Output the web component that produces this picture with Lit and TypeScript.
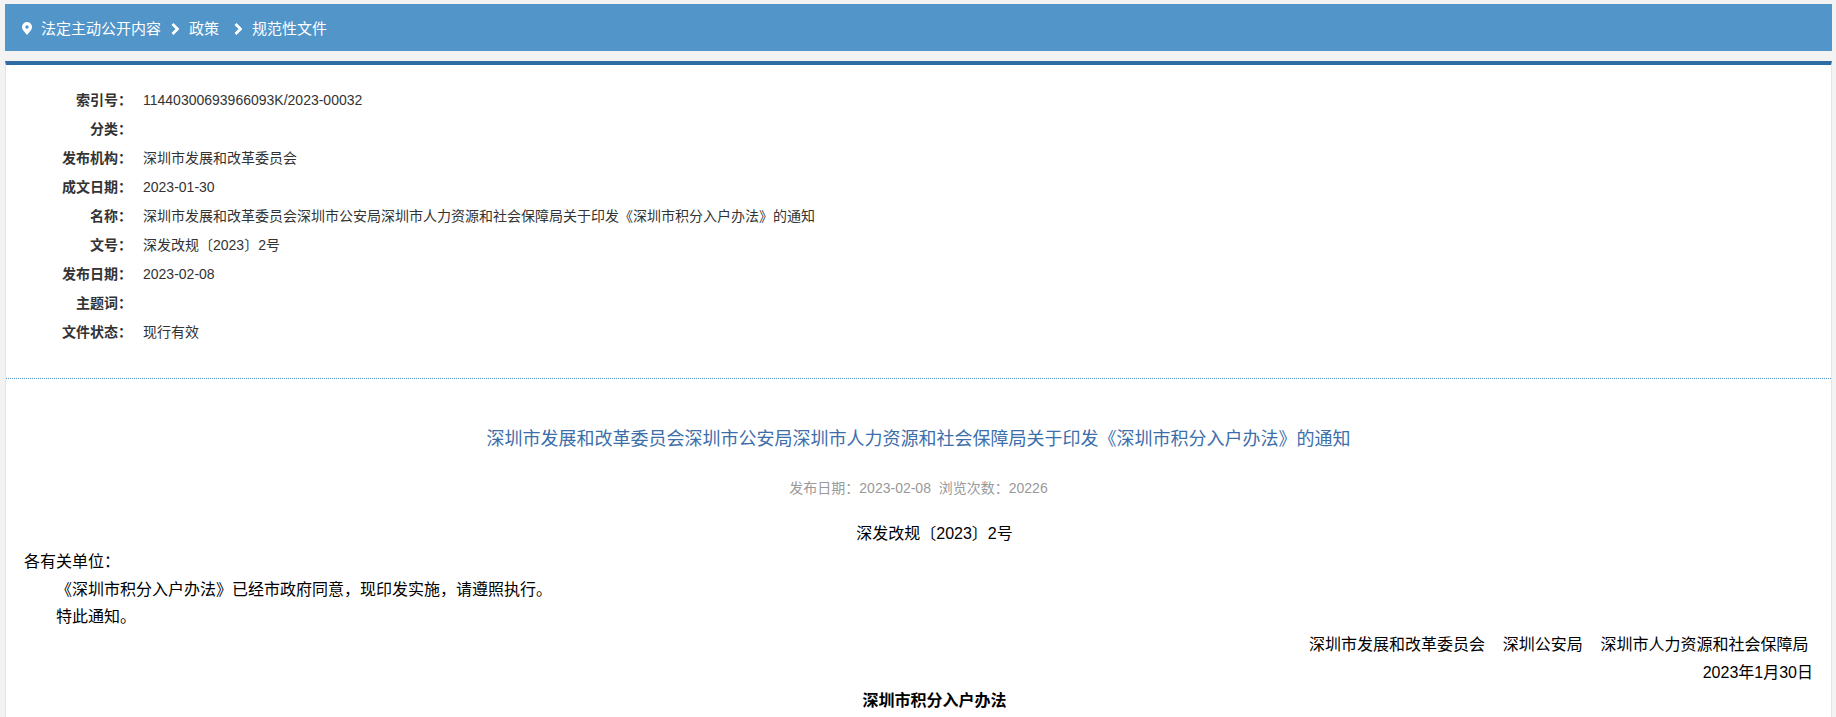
import { LitElement, html, css } from "lit";
import { customElement } from "lit/decorators.js";

const C = "\uFF1A";
const D = "\uFF0C";

const META: [string, string][] = [
  ["索引号", "11440300693966093K/2023-00032"],
  ["分类", ""],
  ["发布机构", "深圳市发展和改革委员会"],
  ["成文日期", "2023-01-30"],
  ["名称", "深圳市发展和改革委员会深圳市公安局深圳市人力资源和社会保障局关于印发《深圳市积分入户办法》的通知"],
  ["文号", "深发改规〔2023〕2号"],
  ["发布日期", "2023-02-08"],
  ["主题词", ""],
  ["文件状态", "现行有效"],
];

@customElement("app-root")
export class AppRoot extends LitElement {
  static styles = css`
    :host {
      display: flex;
      flex-direction: column;
      box-sizing: border-box;
      height: 717px;
      overflow: hidden;
      padding: 4px 4px 0 5px;
      background: #f3f3f3;
      font-family: "Liberation Sans", "Noto Sans CJK SC", sans-serif;
      color: #000;
    }
    .crumbs {
      display: flex;
      align-items: center;
      flex: none;
      height: 47px;
      padding-left: 17px;
      background: #5295c9;
      color: #fff;
      font-size: 15px;
    }
    .pin { width: 10px; height: 13px; margin: 2px 9px 0 0; }
    .chev { width: 8px; height: 12px; margin: 3px 10px 0; flex: none; }
    .chev.wide { margin-left: 15px; }
    .main {
      flex: 1;
      margin-top: 10px;
      background: #fff;
      border-top: 4px solid #2e6da4;
      border-left: 1px solid #e4e4e4;
      border-right: 1px solid #e4e4e4;
    }
    .meta {
      padding: 21px 0 31px;
      border-bottom: 1px dotted #5295c9;
      font-size: 14px;
      color: #333;
    }
    .row { display: flex; height: 29px; line-height: 29px; }
    .label {
      width: 126px;
      flex: none;
      text-align: right;
      font-weight: bold;
      margin-right: 11px;
    }
    .article { padding: 0 18px; }
    h1 {
      margin: 0;
      padding-top: 45px;
      font-size: 18px;
      font-weight: normal;
      line-height: 30px;
      text-align: center;
      color: #3c6eaa;
    }
    .info {
      margin: 22px 0 20px;
      line-height: 24px;
      font-size: 14px;
      text-align: center;
      color: #999;
    }
    .content { font-size: 16px; line-height: 27.8px; }
    .content p { margin: 0; }
    .ind { text-indent: 2em; }
    .center { text-align: center; }
    .right { text-align: right; }
    .bold { font-weight: bold; }
  `;

  render() {
    const chevron = (cls: string) => html`<svg class="chev ${cls}" viewBox="0 0 8 12"><path d="M1.500 1 6.500 6l-5 5" fill="none" stroke="#fff" stroke-width="2.800"/></svg>`;
    return html`
      <div class="crumbs">
        <svg class="pin" viewBox="0 0 10 13"><path fill-rule="evenodd" fill="#fff" d="M5 0a5 5 0 0 0-5 5c0 1.400.6 2.500 1.300 3.600L5 13l3.700-4.400C9.400 7.500 10 6.400 10 5a5 5 0 0 0-5-5Zm0 3.300a1.700 1.700 0 1 1 0 3.400 1.700 1.700 0 0 1 0-3.400Z"/></svg>
        <span>法定主动公开内容</span>
        ${chevron("")}
        <span>政策</span>
        ${chevron("wide")}
        <span>规范性文件</span>
      </div>
      <div class="main">
        <div class="meta">
          ${META.map(([k, v]) => html`<div class="row"><span class="label">${k}${C}</span><span>${v}</span></div>`)}
        </div>
        <div class="article">
          <h1>深圳市发展和改革委员会深圳市公安局深圳市人力资源和社会保障局关于印发《深圳市积分入户办法》的通知</h1>
          <div class="info">发布日期${C}2023-02-08&nbsp;&nbsp;浏览次数${C}20226</div>
          <div class="content">
            <p class="ind center">深发改规〔2023〕2号</p>
            <p>各有关单位${C}</p>
            <p class="ind">《深圳市积分入户办法》已经市政府同意${D}现印发实施${D}请遵照执行。</p>
            <p class="ind">特此通知。</p>
            <p class="right">深圳市发展和改革委员会&nbsp;&nbsp;&nbsp;&nbsp;深圳公安局&nbsp;&nbsp;&nbsp;&nbsp;深圳市人力资源和社会保障局&nbsp;</p>
            <p class="right">2023年1月30日</p>
            <p class="ind center bold">深圳市积分入户办法</p>
          </div>
        </div>
      </div>
    `;
  }
}
